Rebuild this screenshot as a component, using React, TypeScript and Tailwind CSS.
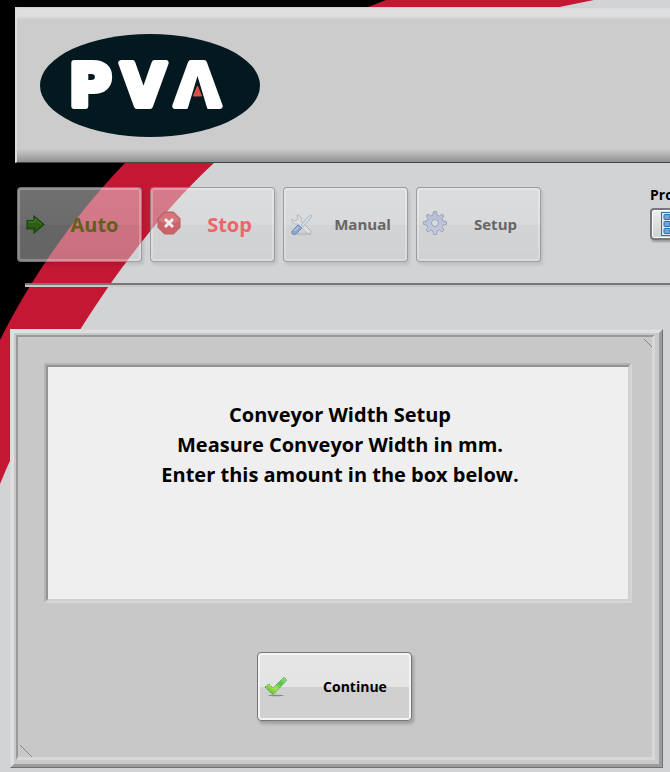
import type { ReactNode } from "react";

const FONT = "font-['Open_Sans','Noto_Sans',sans-serif]";

function Backdrop() {
  return (
    <svg className="pointer-events-none absolute left-0 top-0 h-[500px] w-[670px]" viewBox="0 0 670 500" aria-hidden="true">
      <path d="M0 0H594C430 32 310 75 214 163C130 240 50 365 0 484Z" fill="#c31733" />
      <path d="M0 0H386C280 40 195 90 125 163C75 215 32 276 0 340Z" fill="#000" />
    </svg>
  );
}

function Logo() {
  return (
    <svg className="h-[103px] w-[220px]" viewBox="0 0 220 103" role="img" aria-label="PVA">
      <ellipse cx="110" cy="51.5" rx="110" ry="51.5" fill="#04181f" />
      <text
        y="72"
        x="29 81 135"
        fontFamily="DejaVu Sans"
        fontWeight="bold"
        fontSize="58"
        fill="#fff"
        stroke="#fff"
        strokeWidth="6"
        strokeLinejoin="round"
      >
        PVA
      </text>
      <path d="M157.500 42L168 77H147Z" fill="#04181f" />
      <path d="M157.500 52L161.500 62H153.500Z" fill="#dc5140" stroke="#dc5140" />
    </svg>
  );
}

function ArrowIcon() {
  return (
    <svg className="h-6 w-6 shrink-0" viewBox="0 0 24 24" aria-hidden="true">
      <path d="M3 7.500H10V3L20 11.500L10 20V16H3Z" fill="#2d5f12" stroke="#1c4310" strokeWidth="1.200" />
      <path d="M4.500 9H11V6L17 11" fill="none" stroke="#477c2c" />
      <path d="M4 15H11V18" fill="none" stroke="#234d12" strokeWidth="1.500" />
    </svg>
  );
}

function StopIcon() {
  return (
    <svg className="mb-1 h-6 w-6 shrink-0" viewBox="0 0 24 24" aria-hidden="true">
      <path d="M7.500 1H16.500L23 7.500V16.500L16.500 23H7.500L1 16.500V7.500Z" fill="#cb646a" stroke="#bd5a62" />
      <path d="M2 10V8L8 2H16L22 8V10Q12 16 2 10Z" fill="#d98488" opacity=".6" />
      <path d="M8 8L16 16M16 8L8 16" stroke="#eeeaeb" strokeWidth="3" />
    </svg>
  );
}

function ToolsIcon() {
  return (
    <svg className="h-6 w-6 shrink-0" viewBox="0 0 24 24" aria-hidden="true">
      <ellipse cx="13" cy="21" rx="9" ry="1.500" fill="#bfc1c4" />
      <path d="M2 6L5 8L8 6L7 2C10 2 12 5 11 8L21 18L20 21L17 20L8 11C4 12 1 9 2 6Z" fill="#dcdfe2" stroke="#b3b8be" />
      <path d="M11 12L18 4L21 2L22 3L20 6L13 14Z" fill="#d6dde5" stroke="#aab8c8" />
      <path d="M2 18L8 12L12 15L6 21Q1 23 2 18Z" fill="#8aa4cf" stroke="#7890b8" />
      <path d="M4 18L9 14" stroke="#b6c7e2" strokeWidth="1.500" />
    </svg>
  );
}

function GearIcon() {
  return (
    <svg className="mb-1 h-6 w-6 shrink-0" viewBox="0 0 24 24" aria-hidden="true">
      <defs>
        <linearGradient id="gear" x1="0" y1="0" x2="0" y2="1">
          <stop offset="0" stopColor="#b1bcd2" />
          <stop offset="1" stopColor="#c8cbe2" />
        </linearGradient>
      </defs>
      <path
        d="M10.500 .5H13.500L14 4L16.500 5L19 3L21 5L19 7.500L20 10L23.500 10.500V13.500L20 14L19 16.500L21 19L19 21L16.500 19L14 20L13.500 23.500H10.500L10 20L7.500 19L5 21L3 19L5 16.500L4 14L.5 13.500V10.500L4 10L5 7.500L3 5L5 3L7.500 5L10 4Z"
        fill="url(#gear)"
        stroke="#9ba5b9"
      />
      <circle cx="12" cy="12" r="3.500" fill="#dadbdd" stroke="#9ba5b9" />
    </svg>
  );
}

function CheckIcon() {
  return (
    <svg className="h-6 w-6 shrink-0" viewBox="0 0 24 24" aria-hidden="true">
      <defs>
        <linearGradient id="check" x1="0" y1="1" x2="1" y2="0">
          <stop offset="0" stopColor="#3bae20" />
          <stop offset=".4" stopColor="#a8e455" />
          <stop offset=".65" stopColor="#55c142" />
          <stop offset="1" stopColor="#a9dda9" />
        </linearGradient>
      </defs>
      <ellipse cx="12" cy="20.500" rx="8" ry=".7" fill="#888" />
      <path d="M1 12L5 9L9 13L20 2L23 5L10 19H8Z" fill="url(#check)" stroke="#3a9a38" strokeWidth=".8" strokeDasharray="1.500 1" />
    </svg>
  );
}

function ListIcon() {
  return (
    <svg className="h-6 w-6 shrink-0" viewBox="0 0 24 24" aria-hidden="true">
      <rect x=".5" y=".5" width="23" height="23" fill="#dbe9f6" stroke="#2f6fae" />
      {[3, 10, 17].map((y) => (
        <g key={y}>
          <rect x="3" y={y - 0.500} width="6" height="5" rx="1" fill="#6fa8d8" stroke="#2b6ca8" />
          <path d={`M12 ${y + 2}H21`} stroke="#2b6ca8" />
        </g>
      ))}
    </svg>
  );
}

function ModeButton({ icon, label, className }: { icon: ReactNode; label: string; className: string }) {
  return (
    <button
      disabled
      className="flex h-[75px] w-[125px] shrink-0 items-center rounded border border-[#77777799] bg-[linear-gradient(180deg,#e8e8e87c_0%,#e0e0e07a_50%,#d4d4d47a_51%,#d0d0d07c_100%)] pl-1.5 shadow-[inset_0_0_0_2px_#ffffff40,2px_3px_3px_#00000018]"
    >
      {icon}
      <span className={`flex-1 text-center font-bold ${className}`}>{label}</span>
    </button>
  );
}

export default function App() {
  return (
    <main className={`relative min-h-screen overflow-hidden bg-[#d1d3d5] pt-[7px] text-black ${FONT}`}>
      <Backdrop />
      <div className="relative">
        <header className="ml-[15px] flex h-[156px] items-start border-b border-l-2 border-b-[#444] border-l-[#dcdcdc] bg-[linear-gradient(180deg,#cccccc_0px,#dfdfdf_2px,#dedede_9px,#cccccc_13px,#cccccc_142px,#919191_155px)] pl-[23px] pt-[27px]">
          <Logo />
        </header>

        <nav className="flex justify-between pl-[17px] pt-6">
          <div className="flex gap-2">
            <ModeButton icon={<ArrowIcon />} label="Auto" className="pl-2 pr-2 text-xl text-[#60601b]" />
            <ModeButton icon={<StopIcon />} label="Stop" className="pl-3 pr-2 text-xl text-[#ee6468]" />
            <ModeButton icon={<ToolsIcon />} label="Manual" className="pl-3 pr-2 text-[15px] text-[#666]" />
            <ModeButton icon={<GearIcon />} label="Setup" className="pl-3 pr-2 text-[15px] text-[#666]" />
          </div>
          <div className="w-5 overflow-hidden">
            <div className="w-20">
              <label htmlFor="program" className="block h-[21px] text-sm font-bold leading-4">Pro</label>
              <button
                id="program"
                className="flex h-8 w-16 items-center rounded border-2 border-[#777] bg-[linear-gradient(180deg,#eee,#d0d0d0)] pl-[9px] shadow-[inset_0_0_0_1px_#fff,1px_2px_2px_#0004]"
              >
                <ListIcon />
              </button>
            </div>
          </div>
        </nav>

        <hr className="ml-[25px] mt-[21px] h-1 border-0 border-b-2 border-t-2 border-b-[#c8c8c8] border-t-[#777]" />

        <section className="ml-2.5 mr-[7px] mt-[42px] border border-b-[#6f7074] border-l-[#d8d8d8] border-r-[#6f7074] border-t-[#d8d8d8]">
          <div className="border-[3px] border-b-[#9c9c9c] border-l-[#dfdfdf] border-r-[#9c9c9c] border-t-[#dfdfdf]">
            <div className="border-b-4 border-l-2 border-r-4 border-t-2 border-b-[#cacaca] border-l-[#c8c8c8] border-r-[#cacaca] border-t-[#c8c8c8]">
              <div className="relative flex h-[425px] flex-col items-center border-b-[3px] border-l-2 border-r-[3px] border-t-2 border-b-[#d8d8d8] border-l-[#999] border-r-[#d8d8d8] border-t-[#999] bg-[#c8c8c8] pl-[26px] pr-5 pt-[26px]">
                <svg className="absolute right-0 top-0.5 h-2 w-2" aria-hidden="true">
                  <path d="M0 0L8 8" stroke="#888" />
                </svg>
                <svg className="absolute bottom-0 left-0.5 h-3 w-3" aria-hidden="true">
                  <path d="M0 0L12 12" stroke="#888" />
                </svg>
                <div className="w-full border-2 border-b-[#d6d6d6] border-l-[#b4b4b4] border-r-[#d6d6d6] border-t-[#b4b4b4]">
                  <div className="h-[236px] border-2 border-b-[#d0d0d0] border-l-[#939393] border-r-[#d0d0d0] border-t-[#939393] bg-[#efefef] pl-1 pt-[33px] text-center text-xl font-bold leading-[30px]">
                    <p>Conveyor Width Setup</p>
                    <p>Measure Conveyor Width in mm.</p>
                    <p>Enter this amount in the box below.</p>
                  </div>
                </div>
                <button className="mr-2 mt-[49px] flex h-[69px] w-[155px] shrink-0 items-center rounded border border-[#777] bg-[linear-gradient(180deg,#e6e6e6_0%,#e4e4e4_50%,#d0d0d0_51%,#d0d0d0_100%)] pl-1.5 shadow-[inset_0_0_0_2px_#f4f4f4,2px_3px_3px_#0003]">
                  <CheckIcon />
                  <span className="flex-1 pl-3 text-center text-sm font-bold">Continue</span>
                </button>
              </div>
            </div>
          </div>
        </section>
      </div>
    </main>
  );
}
